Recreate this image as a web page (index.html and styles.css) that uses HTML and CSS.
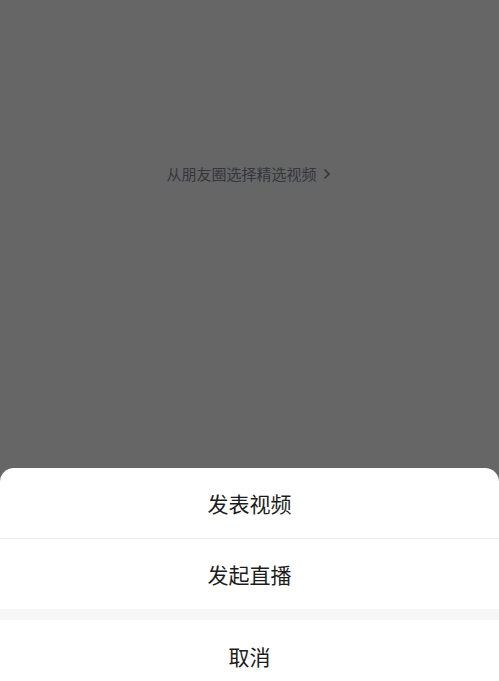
FILE: index.html
```html
<!DOCTYPE html>
<html lang="zh">
<head>
<meta charset="utf-8">
<link rel="stylesheet" href="styles.css">
</head>
<body>
<div class="page">
  <div class="backdrop">
    <div class="pick">从朋友圈选择精选视频<svg class="chev" width="8" height="12" viewBox="0 0 8 12"><path d="M1.5 1.5 L6 6 L1.5 10.5" fill="none" stroke="#34363c" stroke-width="1.6"/></svg></div>
  </div>
  <div class="sheet">
    <div class="item first">发表视频</div>
    <div class="item second">发起直播</div>
    <div class="gap"></div>
    <div class="item cancel">取消</div>
  </div>
</div>
</body>
</html>
```
FILE: styles.css
```css
html, body { margin: 0; padding: 0; }
body { font-family: "Noto Sans CJK SC", "Noto Sans", sans-serif; background: #666666; }
.page { width: 499px; height: 681px; display: flex; flex-direction: column; overflow: hidden; }
.backdrop { height: 468px; flex: none; background: #666666; display: flex; justify-content: center; align-items: flex-start; padding-top: 163px; box-sizing: border-box; }
.pick { font-size: 15px; line-height: 22px; color: #34363c; display: flex; align-items: center; gap: 6px; margin-right: 2px; }
.chev { display: block; }
.sheet { flex: 1; background: #ffffff; border-radius: 14px 14px 0 0; display: flex; flex-direction: column; }
.item { display: flex; align-items: center; justify-content: center; font-size: 21px; color: #1c1c1c; }
.first { height: 70px; border-bottom: 1px solid #ececec; }
.second { height: 70px; }
.gap { height: 11px; background: #f6f6f6; flex: none; }
.cancel { height: 72px; }
```
